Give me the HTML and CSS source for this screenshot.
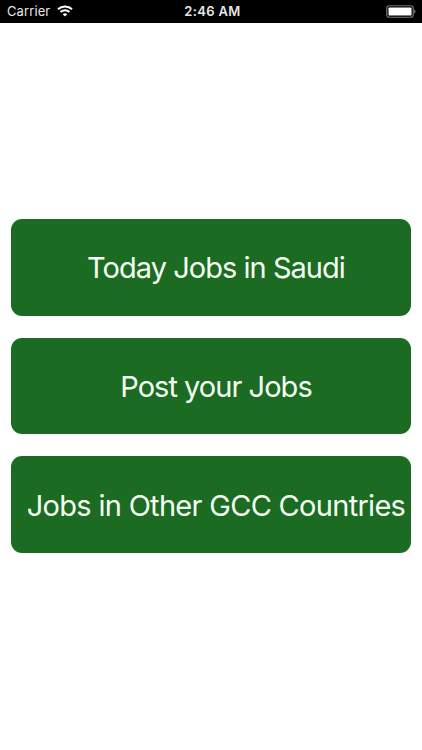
FILE: index.html
```html
<!DOCTYPE html>
<html lang="en">
<head>
    <meta charset="UTF-8">
    <meta name="viewport" content="width=device-width, initial-scale=1.0">
    <title>Saudi Jobs</title>
    <link rel="stylesheet" href="styles.css">
</head>
<body>
    <header class="status-bar">
        <div class="carrier">
            <span>Carrier</span>
            <svg class="wifi" viewBox="0 0 16 12" width="16" height="12">
                <path d="M1 4.2a10.2 10.2 0 0 1 14 0" />
                <path d="M3.5 7a6.6 6.6 0 0 1 9 0" />
                <path class="dot" d="M8 11.6L5.7 9.3a3.3 3.3 0 0 1 4.6 0z" />
            </svg>
        </div>
        <div class="time">2:46 AM</div>
        <div class="battery">
            <svg viewBox="0 0 30 13" width="30" height="13">
                <rect class="outline" x="0.75" y="0.75" width="26.5" height="11.5" rx="2.5" />
                <rect class="level" x="2.5" y="2.5" width="23" height="8" rx="0.8" />
                <path class="cap" d="M28.2 4.5a2.2 2.2 0 0 1 0 4z" />
            </svg>
        </div>
    </header>
    <main class="menu">
        <button class="menu-button">Today Jobs in Saudi</button>
        <button class="menu-button">Post your Jobs</button>
        <button class="menu-button wide">Jobs in Other GCC Countries</button>
    </main>
</body>
</html>
```

FILE: styles.css
```css
body {
    margin: 0;
    background-color: #ffffff;
    font-family: Inter, "Liberation Sans", sans-serif;
}

.status-bar {
    display: grid;
    grid-template-columns: 1fr auto 1fr;
    align-items: center;
    box-sizing: border-box;
    height: 22.5px;
    padding: 0 6px 0 7px;
    background-color: #000000;
    color: #e6e6e6;
    font-size: 13px;
}

.carrier {
    display: flex;
    align-items: center;
    gap: 7px;
    letter-spacing: 0.1px;
}

.wifi path {
    fill: none;
    stroke: #ffffff;
    stroke-width: 2;
}

.wifi .dot {
    fill: #ffffff;
    stroke: none;
}

.time {
    padding-left: 2px;
    font-weight: 600;
    letter-spacing: 0.35px;
}

.battery {
    display: flex;
    justify-content: flex-end;
}

.outline {
    fill: none;
    stroke: #777777;
    stroke-width: 1.2;
}

.level {
    fill: #ffffff;
}

.cap {
    fill: #777777;
}

.menu {
    display: flex;
    flex-direction: column;
    gap: 22px;
    padding: 196.8px 11px 0;
}

.menu-button {
    height: 96.5px;
    padding: 0 0 0 10px;
    border: none;
    border-radius: 11px;
    background-color: #1c6b22;
    color: #f6fff4;
    font-family: inherit;
    font-size: 29px;
    font-weight: 400;
    letter-spacing: -0.97px;
    white-space: nowrap;
    cursor: pointer;
}

.menu-button.wide {
    padding-top: 1px;
    letter-spacing: -0.7px;
}
```
